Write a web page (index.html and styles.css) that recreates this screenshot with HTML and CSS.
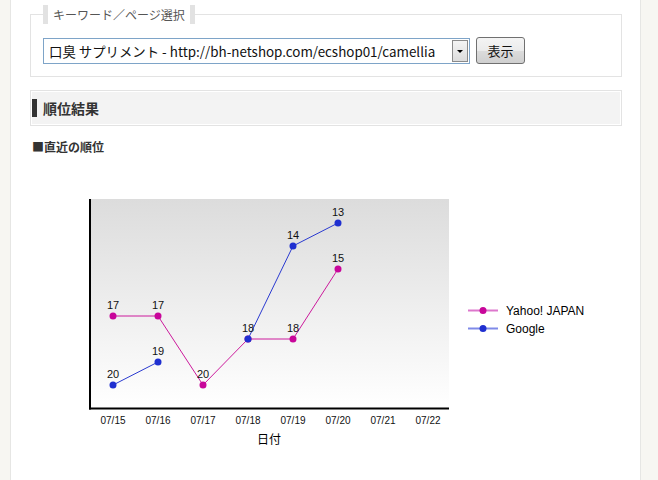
FILE: index.html
```html
<!DOCTYPE html>
<html lang="ja">
  <head>
    <meta charset="UTF-8" />
    <title>順位結果</title>
    <link rel="stylesheet" href="styles.css">
  </head>
  <body>
    <div class="page">
      <fieldset class="picker">
        <legend>キーワード／ページ選択</legend>
        <div class="picker-row">
          <div class="select">
            <span class="select-text">口臭 サプリメント - http://bh-netshop.com/ecshop01/camellia</span>
            <span class="select-arrow"></span>
          </div>
          <button class="show-button">表示</button>
        </div>
      </fieldset>

      <h2 class="section-title">順位結果</h2>
      <div class="sub-title">■直近の順位</div>

      <!-- chart: viewBox uses page coordinates -->
      <svg class="chart" width="629" height="324" viewBox="11 156 629 324">
        <defs>
          <linearGradient id="plotbg" x1="0" y1="0" x2="0" y2="1">
            <stop offset="0" stop-color="#dcdcdc" />
            <stop offset="1" stop-color="#ffffff" />
          </linearGradient>
        </defs>
        <rect x="91" y="199" width="358" height="209" fill="url(#plotbg)" />
        <line x1="90" y1="199" x2="90" y2="409.5" stroke="#000" stroke-width="2" />
        <line x1="89" y1="408.5" x2="449" y2="408.5" stroke="#000" stroke-width="2" />

        <!-- Yahoo! JAPAN -->
        <polyline points="113,316 158,316 203,385 248,339 293,339 338,269" fill="none" stroke="#cc1a9c" stroke-width="1" />
        <g fill="#c8069a">
          <circle cx="113" cy="316" r="3.5" />
          <circle cx="158" cy="316" r="3.5" />
          <circle cx="203" cy="385" r="3.5" />
          <circle cx="248" cy="339" r="3.5" />
          <circle cx="293" cy="339" r="3.5" />
          <circle cx="338" cy="269" r="3.5" />
        </g>

        <!-- Google -->
        <polyline points="113,385 158,362" fill="none" stroke="#2a3ad0" stroke-width="1" />
        <polyline points="248,339 293,246 338,223" fill="none" stroke="#2a3ad0" stroke-width="1" />
        <g fill="#1f2fd0">
          <circle cx="113" cy="385" r="3.5" />
          <circle cx="158" cy="362" r="3.5" />
          <circle cx="248" cy="339" r="3.5" />
          <circle cx="293" cy="246" r="3.5" />
          <circle cx="338" cy="223" r="3.5" />
        </g>

        <g class="point-label" text-anchor="middle">
          <text x="113" y="309">17</text>
          <text x="158" y="309">17</text>
          <text x="203" y="378">20</text>
          <text x="248" y="332">18</text>
          <text x="293" y="332">18</text>
          <text x="338" y="262">15</text>
          <text x="113" y="378">20</text>
          <text x="158" y="355">19</text>
          <text x="293" y="239">14</text>
          <text x="338" y="216">13</text>
        </g>

        <g class="axis-label" text-anchor="middle">
          <text x="113" y="424">07/15</text>
          <text x="158" y="424">07/16</text>
          <text x="203" y="424">07/17</text>
          <text x="248" y="424">07/18</text>
          <text x="293" y="424">07/19</text>
          <text x="338" y="424">07/20</text>
          <text x="383" y="424">07/21</text>
          <text x="428" y="424">07/22</text>
        </g>
        <text class="axis-title" x="269" y="444" text-anchor="middle">日付</text>

        <!-- legend -->
        <line x1="468" y1="310.5" x2="498" y2="310.5" stroke="#dd77cc" stroke-width="2" />
        <circle cx="483" cy="310.5" r="3.5" fill="#c8069a" />
        <text class="legend-label" x="506" y="315">Yahoo! JAPAN</text>
        <line x1="468" y1="328.5" x2="498" y2="328.5" stroke="#7f8ae8" stroke-width="2" />
        <circle cx="483" cy="328.5" r="3.5" fill="#1f2fd0" />
        <text class="legend-label" x="506" y="333">Google</text>
      </svg>
    </div>
  </body>
</html>
```

FILE: styles.css
```css
body {
  margin: 0;
  background-color: #f7f6f2;
  font-family: "Liberation Sans", "Noto Sans CJK JP", sans-serif;
  color: #333;
}

.page {
  width: 629px;
  min-height: 600px;
  margin-left: 10px;
  padding: 5px 0 0;
  background-color: #fff;
  border-left: 1px solid #e6e6e4;
  border-right: 1px solid #e6e6e4;
}

/* keyword picker */
.picker {
  margin: 0 18px 0 19px;
  padding: 14px 12px 12px 12px;
  border: 1px solid #e3e3e3;
  min-width: 0;
}

.picker legend {
  padding: 0 5px;
  border-left: 5px solid #e2e2e2;
  border-right: 5px solid #e2e2e2;
  font-family: "Noto Sans CJK JP", sans-serif;
  font-size: 12px;
  line-height: 19px;
  color: #555;
}

.picker-row {
  display: flex;
  align-items: flex-start;
  gap: 6px;
}

.select {
  width: 419px;
  height: 24px;
  display: flex;
  align-items: center;
  justify-content: space-between;
  border: 1px solid #7ea4c8;
  background-color: #fff;
  padding-left: 5px;
  padding-right: 1px;
}

.select-text {
  font-family: "Noto Sans CJK JP", "Liberation Sans", sans-serif;
  font-size: 13.4px;
  color: #111;
  white-space: nowrap;
  overflow: hidden;
}

.select-arrow {
  width: 14px;
  height: 20px;
  flex: none;
  border: 1px solid #8a8a8a;
  background: linear-gradient(#f4f4f4, #dcdcdc);
  display: flex;
  align-items: center;
  justify-content: center;
}

.select-arrow::after {
  content: "";
  border-left: 3px solid transparent;
  border-right: 3px solid transparent;
  border-top: 3px solid #000;
}

.show-button {
  width: 49px;
  height: 27px;
  margin-top: -1px;
  padding: 0;
  border: 1px solid #707070;
  border-radius: 3px;
  background: linear-gradient(#f4f4f4 0%, #ebebeb 50%, #dcdcdc 51%, #cfcfcf 100%);
  font-family: "Noto Sans CJK JP", sans-serif;
  font-size: 13px;
  color: #111;
}

/* section heading */
.section-title {
  margin: 13px 18px 0 19px;
  height: 34px;
  display: flex;
  align-items: center;
  gap: 6px;
  padding-left: 1px;
  border: 1px solid #e3e3e3;
  box-shadow: inset 0 0 0 1px #fff;
  background-color: #f3f3f3;
  font-family: "Noto Sans CJK JP", sans-serif;
  font-size: 14px;
  font-weight: bold;
  color: #333;
}

.section-title::before {
  content: "";
  width: 5px;
  height: 18px;
  background-color: #333;
}

.sub-title {
  margin: 12px 0 0 21px;
  line-height: 18px;
  font-family: "Noto Sans CJK JP", sans-serif;
  font-size: 12px;
  font-weight: bold;
  color: #333;
}

.chart {
  display: block;
}

.point-label {
  font-family: "Liberation Sans", sans-serif;
  font-size: 11px;
  fill: #111;
}

.axis-label {
  font-family: "Liberation Sans", sans-serif;
  font-size: 10px;
  fill: #111;
}

.axis-title {
  font-family: "Noto Sans CJK JP", sans-serif;
  font-size: 12px;
  fill: #000;
}

.legend-label {
  font-family: "Liberation Sans", sans-serif;
  font-size: 12px;
  fill: #000;
}
```
